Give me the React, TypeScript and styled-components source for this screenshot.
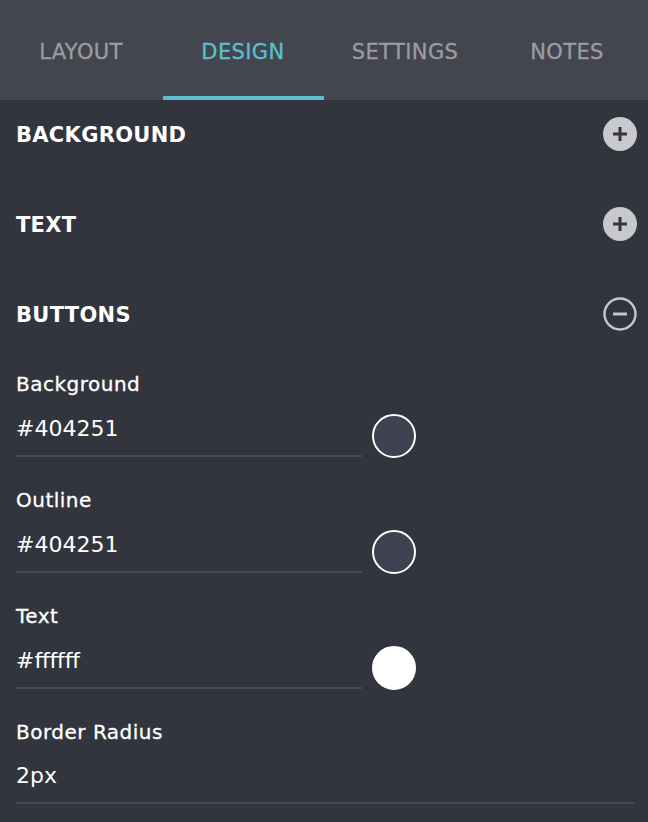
import React from "react";
import styled, { createGlobalStyle } from "styled-components";

const Global = createGlobalStyle`
  html, body { margin: 0; padding: 0; background: #32353d; }
  body { font-family: "DejaVu Sans", "Inter", sans-serif; -webkit-font-smoothing: antialiased; }
  * { box-sizing: border-box; }
`;

const Panel = styled.div`
  width: 648px;
  min-height: 822px;
  background: #32353d;
  color: #ffffff;
`;

const TabBar = styled.nav`
  display: grid;
  grid-template-columns: repeat(4, 1fr);
  height: 100px;
  background: #43464f;
`;

const Tab = styled.div<{ $active?: boolean }>`
  position: relative;
  display: flex;
  align-items: center;
  justify-content: center;
  font-size: 21px;
  font-weight: 400;
  letter-spacing: 0.4px;
  color: ${(p) => (p.$active ? "#5bbfcd" : "#9b9ca2")};
  -webkit-text-stroke: 0.3px ${(p) => (p.$active ? "#5bbfcd" : "#9b9ca2")};
  padding-top: 3px;
  &::after {
    content: "";
    position: absolute;
    left: 1px;
    right: 0;
    bottom: 0;
    height: 4px;
    background: ${(p) => (p.$active ? "#5bbfcd" : "transparent")};
  }
`;

const Section = styled.section`
  padding: 0 11px 0 16px;
`;

const SectionHeader = styled.div<{ $open?: boolean }>`
  display: flex;
  align-items: center;
  justify-content: space-between;
  height: 68px;
  margin-bottom: ${(p) => (p.$open ? "24px" : "22px")};
`;

const SectionTitle = styled.h2`
  margin: 0;
  padding-top: 2px;
  font-size: 21px;
  font-weight: 700;
  letter-spacing: 0.3px;
  color: #ffffff;
`;

const Fields = styled.div`
  display: flex;
  flex-direction: column;
  gap: 30px;
  padding-right: 3px;
`;

const Field = styled.div`
  display: flex;
  flex-direction: column;
  gap: 17px;
`;

const Label = styled.label`
  font-size: 20px;
  font-weight: 400;
  line-height: 24px;
  letter-spacing: 0.5px;
  color: #ffffff;
  -webkit-text-stroke: 0.3px #ffffff;
`;

const ValueRow = styled.div`
  display: flex;
  align-items: center;
`;

const ValueBox = styled.div<{ $full?: boolean }>`
  width: ${(p) => (p.$full ? "100%" : "346px")};
  font-size: 22px;
  font-weight: 400;
  line-height: 28px;
  padding-top: 1px;
  padding-bottom: 12px;
  border-bottom: 2px solid #474a54;
  color: #ffffff;
`;

const Swatch = styled.div<{ $color: string }>`
  width: 44px;
  height: 44px;
  border-radius: 50%;
  border: 2px solid #ffffff;
  background: ${(p) => p.$color};
  margin-left: 10px;
  margin-top: 1px;
`;

const ToggleIcon = ({ open }: { open?: boolean }) =>
  open ? (
    <svg width="34" height="34" viewBox="0 0 34 34">
      <circle cx="17" cy="17" r="15.5" fill="none" stroke="#c6c7ca" strokeWidth="2.4" />
      <line x1="10" y1="17" x2="24" y2="17" stroke="#c6c7ca" strokeWidth="3" />
    </svg>
  ) : (
    <svg width="34" height="34" viewBox="0 0 34 34">
      <circle cx="17" cy="17" r="17" fill="#c8c9cc" />
      <line x1="10" y1="17" x2="24" y2="17" stroke="#32353d" strokeWidth="3" />
      <line x1="17" y1="10" x2="17" y2="24" stroke="#32353d" strokeWidth="3" />
    </svg>
  );

const colorFields = [
  { label: "Background", value: "#404251", color: "#404251" },
  { label: "Outline", value: "#404251", color: "#404251" },
  { label: "Text", value: "#ffffff", color: "#ffffff" },
];

export default function App() {
  const tabs = ["LAYOUT", "DESIGN", "SETTINGS", "NOTES"];
  return (
    <Panel>
      <Global />
      <TabBar>
        {tabs.map((t) => (
          <Tab key={t} $active={t === "DESIGN"}>
            {t}
          </Tab>
        ))}
      </TabBar>
      <Section>
        <SectionHeader>
          <SectionTitle>BACKGROUND</SectionTitle>
          <ToggleIcon />
        </SectionHeader>
      </Section>
      <Section>
        <SectionHeader>
          <SectionTitle>TEXT</SectionTitle>
          <ToggleIcon />
        </SectionHeader>
      </Section>
      <Section>
        <SectionHeader $open>
          <SectionTitle>BUTTONS</SectionTitle>
          <ToggleIcon open />
        </SectionHeader>
        <Fields>
          {colorFields.map((f) => (
            <Field key={f.label}>
              <Label>{f.label}</Label>
              <ValueRow>
                <ValueBox>{f.value}</ValueBox>
                <Swatch $color={f.color} />
              </ValueRow>
            </Field>
          ))}
          <Field>
            <Label>Border Radius</Label>
            <ValueRow>
              <ValueBox $full>2px</ValueBox>
            </ValueRow>
          </Field>
        </Fields>
      </Section>
    </Panel>
  );
}
